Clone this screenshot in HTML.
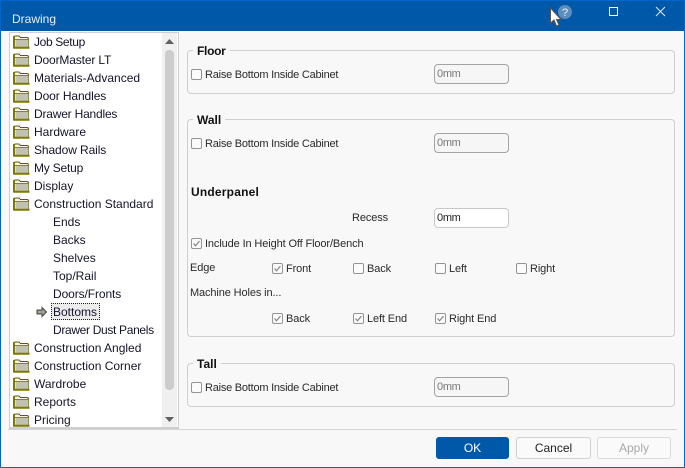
<!DOCTYPE html>
<html><head><meta charset="utf-8"><style>
html,body{margin:0;padding:0}
body{width:685px;height:468px;overflow:hidden;position:relative;background:#f8f8f8;font-family:"Liberation Sans",sans-serif;font-size:12px;color:#1a1a1a}
.a{position:absolute;white-space:nowrap}
.t{position:absolute;white-space:nowrap;line-height:16px;height:16px}
.l{position:absolute;white-space:nowrap;line-height:16px;height:16px;font-size:11px;letter-spacing:-.12px;color:#2a2a2a;margin-top:1px}
.r{letter-spacing:-.23px}
.row{position:absolute;white-space:nowrap;line-height:16px;color:#14142a}
.g{position:absolute;left:187px;width:486px;border:1px solid #cfcfcf;border-radius:4px;box-sizing:content-box}
.lg{position:absolute;left:193px;background:#f8f8f8;padding:0 4px;font-weight:bold;font-size:12px;line-height:14px;color:#111}
.cb{position:absolute;width:9px;height:9px;border:1px solid #949494;border-radius:2px;background:#fbfbfb}
.cb svg{position:absolute;left:0;top:0}
.in{position:absolute;left:434px;width:73px;height:18px;border:1px solid #a4a4a4;border-radius:4px;background:#f6f6f6;color:#777;line-height:18px;text-indent:2px;font-size:11px;letter-spacing:-.3px}
.btn{position:absolute;top:437px;width:72px;height:20px;border:1px solid #d0d0d0;border-radius:3px;background:#fafafa;text-align:center;line-height:20px}
</style></head><body>
<div class="a" style="left:0;top:0;width:685px;height:468px;box-sizing:border-box;border:1px solid #0066cc;z-index:9"></div>
<div class="a" style="left:0;top:0;width:685px;height:31px;background:#0059a8;border-top:1px solid #0066cc;box-sizing:border-box"></div>
<div class="t" style="left:12px;top:11px;color:#e8f0f8">Drawing</div>

<svg class="a" style="left:548px;top:4px;z-index:10" width="28" height="26" viewBox="0 0 28 26">
<circle cx="17" cy="8" r="7" fill="#5b8dbf"/>
<text x="17" y="12" font-family="Liberation Sans" font-size="11" text-anchor="middle" fill="#f0f4f8">?</text>
<path d="M2.5 4 L2.5 19 L6 16 L8.5 22 L11 21 L8.5 15.5 L13 15.5 Z" fill="#fff" stroke="#555" stroke-width="1"/>
</svg>
<svg class="a" style="left:608px;top:6px" width="60" height="12" viewBox="0 0 60 12">
<rect x="1.5" y="1.5" width="8" height="8" fill="none" stroke="#fff" stroke-width="1"/>
<path d="M48 1 L57 10 M57 1 L48 10" stroke="#dfe8f2" stroke-width="1" fill="none"/>
</svg>

<!-- Tree -->
<div class="a" style="left:9px;top:32px;height:397px;background:#fff;border:1px solid #cfcfcf;border-bottom:2px solid #cfcfcf;box-sizing:border-box;width:170px"></div>
<div class="a" style="left:162px;top:33px;width:15px;height:394px;background:#f0f0f0"></div>
<div class="a" style="left:165px;top:50px;width:9px;height:340px;background:#cdcdcd;border-radius:4px"></div>
<svg class="a" style="left:164px;top:38px" width="12" height="8"><path d="M1 6 L5.500 1 L10 6Z" fill="#606060"/></svg>
<svg class="a" style="left:164px;top:416px" width="12" height="8"><path d="M1 1 L10 1 L5.500 6Z" fill="#606060"/></svg>

<svg width="0" height="0" style="position:absolute"><defs>
<symbol id="f" viewBox="0 0 17 14">
<path d="M1 13 V2.500 Q1 1 2.500 1 H6 L7.500 2.500 H14 Q15.500 2.500 15.500 4 V13 Z" fill="#f4f4e4" stroke="#5c5a10" stroke-width="1"/>
<rect x="2.500" y="5" width="13" height="7" fill="#c2c2b0"/>
<path d="M1 4.500 H16" stroke="#8a8610" stroke-width="1"/>
<path d="M1 1 V13.500 M0.500 12.800 H16.500" stroke="#7d7a00" stroke-width="2" fill="none"/>
</symbol></defs></svg>

<svg class="a" style="left:13px;top:35px" width="17" height="14"><use href="#f"/></svg><div class="row" style="left:34px;top:34px;letter-spacing:-.35px">Job Setup</div>
<svg class="a" style="left:13px;top:53px" width="17" height="14"><use href="#f"/></svg><div class="row" style="left:34px;top:52px;letter-spacing:-.15px">DoorMaster LT</div>
<svg class="a" style="left:13px;top:71px" width="17" height="14"><use href="#f"/></svg><div class="row" style="left:34px;top:70px">Materials-Advanced</div>
<svg class="a" style="left:13px;top:89px" width="17" height="14"><use href="#f"/></svg><div class="row" style="left:34px;top:88px;letter-spacing:-.1px">Door Handles</div>
<svg class="a" style="left:13px;top:107px" width="17" height="14"><use href="#f"/></svg><div class="row" style="left:34px;top:106px;letter-spacing:-.2px">Drawer Handles</div>
<svg class="a" style="left:13px;top:125px" width="17" height="14"><use href="#f"/></svg><div class="row" style="left:34px;top:124px">Hardware</div>
<svg class="a" style="left:13px;top:143px" width="17" height="14"><use href="#f"/></svg><div class="row" style="left:34px;top:142px;letter-spacing:-.1px">Shadow Rails</div>
<svg class="a" style="left:13px;top:161px" width="17" height="14"><use href="#f"/></svg><div class="row" style="left:34px;top:160px;letter-spacing:-.2px">My Setup</div>
<svg class="a" style="left:13px;top:179px" width="17" height="14"><use href="#f"/></svg><div class="row" style="left:34px;top:178px">Display</div>
<svg class="a" style="left:13px;top:197px" width="17" height="14"><use href="#f"/></svg><div class="row" style="left:34px;top:196px">Construction Standard</div>
<div class="row" style="left:53px;top:214px">Ends</div>
<div class="row" style="left:53px;top:232px">Backs</div>
<div class="row" style="left:53px;top:250px">Shelves</div>
<div class="row" style="left:53px;top:268px">Top/Rail</div>
<div class="row" style="left:53px;top:286px;letter-spacing:-.1px">Doors/Fronts</div>
<svg class="a" style="left:36px;top:306px" width="12" height="12"><path d="M1 4 H6 V1.500 L10.500 6 L6 10.500 V8 H1 Z" fill="#a0a090" stroke="#444" stroke-width="1"/></svg>
<div class="a" style="left:51px;top:303px;width:47px;height:15px;background:#ececec;border:1px dotted #222"></div>
<div class="row" style="left:53px;top:304px">Bottoms</div>
<div class="row" style="left:53px;top:322px;letter-spacing:-.33px">Drawer Dust Panels</div>
<svg class="a" style="left:13px;top:341px" width="17" height="14"><use href="#f"/></svg><div class="row" style="left:34px;top:340px">Construction Angled</div>
<svg class="a" style="left:13px;top:359px" width="17" height="14"><use href="#f"/></svg><div class="row" style="left:34px;top:358px">Construction Corner</div>
<svg class="a" style="left:13px;top:377px" width="17" height="14"><use href="#f"/></svg><div class="row" style="left:34px;top:376px">Wardrobe</div>
<svg class="a" style="left:13px;top:395px" width="17" height="14"><use href="#f"/></svg><div class="row" style="left:34px;top:394px">Reports</div>
<svg class="a" style="left:13px;top:413px" width="17" height="14"><use href="#f"/></svg><div class="row" style="left:34px;top:412px">Pricing</div>

<!-- Groups -->
<div class="g" style="top:50px;height:42px"></div><div class="lg" style="top:44px;letter-spacing:-.3px">Floor</div>
<div class="g" style="top:119px;height:216px"></div><div class="lg" style="top:113px">Wall</div>
<div class="g" style="top:363px;height:42px"></div><div class="lg" style="top:357px">Tall</div>

<div class="cb" style="left:191px;top:69px"></div><div class="l r" style="left:205px;top:66px">Raise Bottom Inside Cabinet</div>
<div class="in" style="top:64px">0mm</div>
<div class="cb" style="left:191px;top:138px"></div><div class="l r" style="left:205px;top:135px">Raise Bottom Inside Cabinet</div>
<div class="in" style="top:133px">0mm</div>

<div class="t" style="left:191px;top:184px;font-weight:bold;color:#111;letter-spacing:.2px">Underpanel</div>
<div class="l" style="left:352px;top:209px">Recess</div>
<div class="in" style="top:208px;background:#fff;color:#222;border-color:#c8c8c8">0mm</div>

<div class="cb" style="left:191px;top:238px"><svg width="9" height="9"><path d="M1.500 4.500 L3.500 6.800 L7.500 2" fill="none" stroke="#888" stroke-width="1.200"/></svg></div><div class="l" style="left:205px;top:235px">Include In Height Off Floor/Bench</div>
<div class="l" style="left:190px;top:259px">Edge</div>
<div class="cb" style="left:272px;top:263px"><svg width="9" height="9"><path d="M1.500 4.500 L3.500 6.800 L7.500 2" fill="none" stroke="#888" stroke-width="1.200"/></svg></div><div class="l" style="left:286px;top:260px">Front</div>
<div class="cb" style="left:353px;top:263px"></div><div class="l" style="left:367px;top:260px">Back</div>
<div class="cb" style="left:435px;top:263px"></div><div class="l" style="left:449px;top:260px">Left</div>
<div class="cb" style="left:516px;top:263px"></div><div class="l" style="left:530px;top:260px">Right</div>
<div class="l" style="left:190px;top:284px">Machine Holes in...</div>
<div class="cb" style="left:272px;top:313px"><svg width="9" height="9"><path d="M1.500 4.500 L3.500 6.800 L7.500 2" fill="none" stroke="#888" stroke-width="1.200"/></svg></div><div class="l" style="left:286px;top:310px">Back</div>
<div class="cb" style="left:353px;top:313px"><svg width="9" height="9"><path d="M1.500 4.500 L3.500 6.800 L7.500 2" fill="none" stroke="#888" stroke-width="1.200"/></svg></div><div class="l" style="left:367px;top:310px">Left End</div>
<div class="cb" style="left:435px;top:313px"><svg width="9" height="9"><path d="M1.500 4.500 L3.500 6.800 L7.500 2" fill="none" stroke="#888" stroke-width="1.200"/></svg></div><div class="l" style="left:449px;top:310px">Right End</div>

<div class="cb" style="left:191px;top:382px"></div><div class="l r" style="left:205px;top:379px">Raise Bottom Inside Cabinet</div>
<div class="in" style="top:377px">0mm</div>

<!-- Footer -->
<div class="a" style="left:8px;top:429px;width:669px;height:1px;background:#d4d4d4"></div>
<div class="btn" style="left:436px;width:71px;background:#0059a8;border-color:#0059a8;color:#fff">OK</div>
<div class="btn" style="left:516px;width:73px;color:#222">Cancel</div>
<div class="btn" style="left:597px;color:#a8a8a8;border-color:#dcdcdc">Apply</div>
</body></html>
